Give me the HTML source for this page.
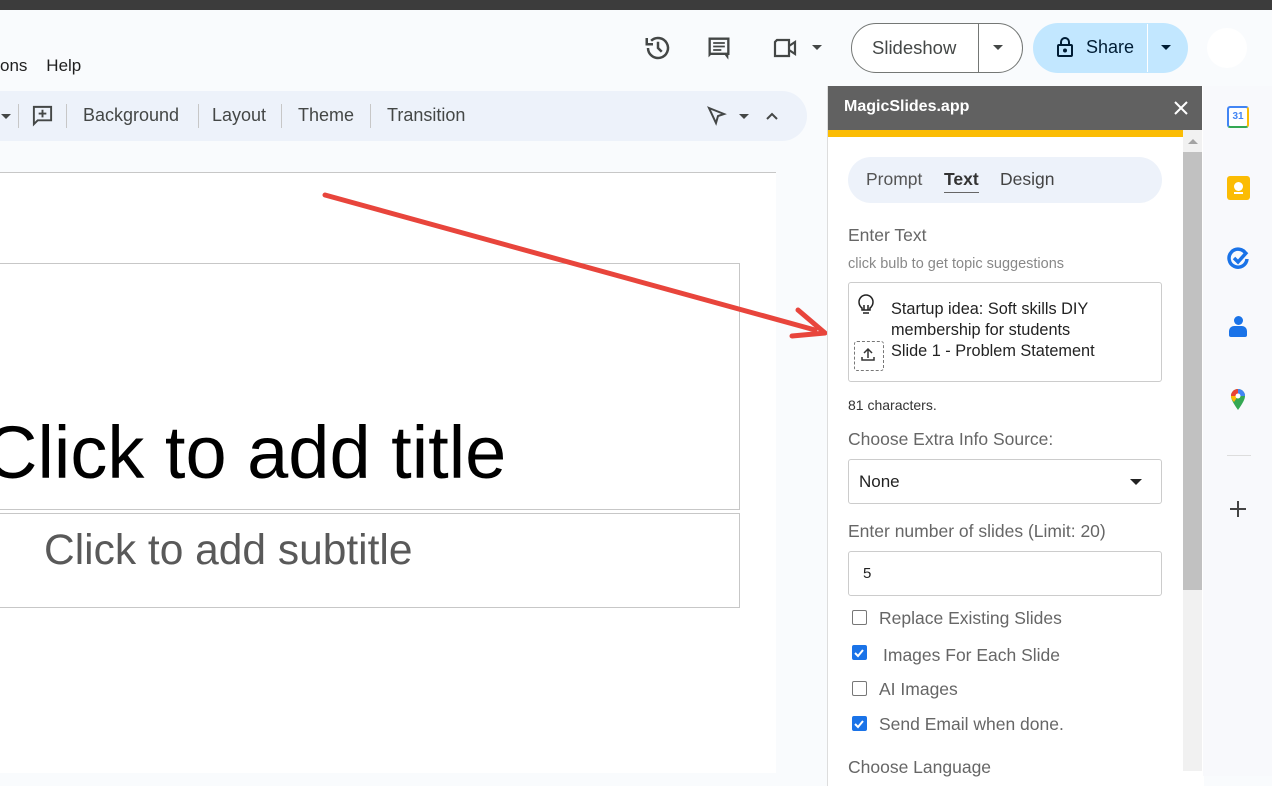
<!DOCTYPE html><html><head><style>
body{margin:0;width:1272px;height:771px;overflow:hidden;background:#f9fbfd;font-family:"Liberation Sans",sans-serif;position:relative}
.a{position:absolute}
.t{color:#444746;font-size:18px}
.cb{position:absolute;left:852px;width:13px;height:13px;border:1px solid #777;border-radius:2px;background:#fff}
.cb.on{background:#1a73e8;border-color:#1a73e8}
.lbl{position:absolute;left:879px;font-size:17px;color:#666}
</style></head><body>
<div class="a" style="left:0;top:0;width:1272px;height:10px;background:#3c3c3c"></div>
<div class="a" style="left:0;top:56px;font-size:17px;color:#1f1f1f">ons&nbsp;&nbsp;&nbsp;&nbsp;Help</div>
<svg class="a" style="left:643px;top:33px" width="30" height="30" viewBox="0 0 24 24" fill="none" stroke="#444746" stroke-width="2"><path d="M4 12a8 8 0 1 0 2.5-5.8"/><path d="M3 4v5h5"/><path d="M12 7v5l3 3"/></svg>
<svg class="a" style="left:705px;top:34px" width="28" height="28" viewBox="0 0 24 24" fill="#444746"><path d="M3 3h18v15H5l-2 2zM5 5v11h14V5zM7 7h10v1.5H7zm0 3h10v1.5H7zm0 3h7v1.5H7z"/><path d="M17 18h3v4z"/></svg>
<svg class="a" style="left:773px;top:37px" width="26" height="22" viewBox="0 0 26 22" fill="none" stroke="#444746" stroke-width="2.2"><path d="M4 3h12v16H2V5z"/><path d="M16 9l6-4v12l-6-4"/></svg>
<div class="a" style="left:812px;top:45px;border:5px solid transparent;border-top-color:#444746;border-bottom:0"></div>
<div class="a" style="left:851px;top:23px;width:170px;height:48px;border:1px solid #747775;border-radius:25px;background:#fff"></div>
<div class="a" style="left:978px;top:24px;width:1px;height:48px;background:#747775"></div>
<div class="a t" style="left:872px;top:37px;font-size:18.5px">Slideshow</div>
<div class="a" style="left:993px;top:45px;border:5px solid transparent;border-top-color:#444746;border-bottom:0"></div>
<div class="a" style="left:1033px;top:23px;width:155px;height:50px;border-radius:25px;background:#c2e7ff"></div>
<div class="a" style="left:1147px;top:24px;width:1px;height:48px;background:#fff"></div>
<svg class="a" style="left:1056px;top:36px" width="18" height="22" viewBox="0 0 18 22" fill="none" stroke="#001d35" stroke-width="2"><rect x="2" y="9" width="14" height="11" rx="1"/><path d="M5 9V6a4 4 0 0 1 8 0v3"/><circle cx="9" cy="14.5" r="1" fill="#001d35"/></svg>
<div class="a" style="left:1086px;top:37px;font-size:18px;color:#001d35">Share</div>
<div class="a" style="left:1161px;top:45px;border:5px solid transparent;border-top-color:#001d35;border-bottom:0"></div>
<div class="a" style="left:1207px;top:28px;width:40px;height:40px;border-radius:50%;background:#fff"></div>
<div class="a" style="left:-30px;top:91px;width:837px;height:50px;border-radius:25px;background:#edf2fa"></div>
<div class="a" style="left:1px;top:114px;border:5px solid transparent;border-top-color:#444746;border-bottom:0"></div>
<div class="a" style="left:18px;top:104px;width:1px;height:24px;background:#c7c7c7"></div>
<svg class="a" style="left:31px;top:104px" width="23" height="23" viewBox="0 0 24 24" fill="none" stroke="#444746" stroke-width="2"><path d="M3 3h18v14H7l-4 4z"/><path d="M12 6v8M8 10h8"/></svg>
<div class="a" style="left:66px;top:104px;width:1px;height:24px;background:#c7c7c7"></div>
<div class="a t" style="left:83px;top:105px">Background</div>
<div class="a" style="left:198px;top:104px;width:1px;height:24px;background:#c7c7c7"></div>
<div class="a t" style="left:212px;top:105px">Layout</div>
<div class="a" style="left:281px;top:104px;width:1px;height:24px;background:#c7c7c7"></div>
<div class="a t" style="left:298px;top:105px">Theme</div>
<div class="a" style="left:370px;top:104px;width:1px;height:24px;background:#c7c7c7"></div>
<div class="a t" style="left:387px;top:105px">Transition</div>
<svg class="a" style="left:707px;top:106px" width="20" height="20" viewBox="0 0 20 20" fill="none" stroke="#444746" stroke-width="2"><path d="M2 2l15 6-6 2-2 7z"/></svg>
<div class="a" style="left:739px;top:114px;border:5px solid transparent;border-top-color:#444746;border-bottom:0"></div>
<svg class="a" style="left:765px;top:111px" width="14" height="10" viewBox="0 0 14 10" fill="none" stroke="#444746" stroke-width="2"><path d="M2 8l5-5 5 5"/></svg>
<div class="a" style="left:0;top:172px;width:776px;height:1px;background:#c7c7c7"></div>
<div class="a" style="left:0;top:173px;width:776px;height:600px;background:#fff"></div>
<div class="a" style="left:-2px;top:263px;width:740px;height:245px;border:1px solid #c7c7c7"></div>
<div class="a" style="left:-2px;top:513px;width:740px;height:93px;border:1px solid #c7c7c7"></div>
<div class="a" style="left:-16px;top:410px;font-size:74px;color:#000;white-space:nowrap">Click to add title</div>
<div class="a" style="left:44px;top:527px;font-size:42.5px;color:#595959;white-space:nowrap">Click to add subtitle</div>
<svg class="a" style="left:320px;top:190px" width="510" height="150"><line x1="5" y1="5" x2="495" y2="140" stroke="#e8453c" stroke-width="5" stroke-linecap="round"/><path d="M478 120L505 143 472 146" fill="none" stroke="#e8453c" stroke-width="5" stroke-linecap="round" stroke-linejoin="round"/></svg>
<div class="a" style="left:827px;top:86px;width:376px;height:700px;background:#fff;border-left:1px solid #ddd"></div>
<div class="a" style="left:828px;top:86px;width:374px;height:44px;background:#616161"></div>
<div class="a" style="left:844px;top:98px;color:#fff;font-weight:bold;font-size:16px">MagicSlides.app</div>
<svg class="a" style="left:1173px;top:100px" width="16" height="16" stroke="#fff" stroke-width="2"><path d="M2 2l12 12M14 2L2 14"/></svg>
<div class="a" style="left:828px;top:130px;width:355px;height:7px;background:#fbbc04"></div>
<div class="a" style="left:1183px;top:130px;width:19px;height:641px;background:#f1f1f1"></div>
<div class="a" style="left:1183px;top:152px;width:19px;height:438px;background:#c1c1c1"></div>
<div class="a" style="left:1188px;top:139px;border:5px solid transparent;border-bottom-color:#a3a3a3;border-top:0"></div>
<div class="a" style="left:848px;top:157px;width:314px;height:46px;border-radius:23px;background:#edf2fa"></div>
<div class="a" style="left:866px;top:169px;font-size:17.5px;color:#555">Prompt</div>
<div class="a" style="left:944px;top:169px;font-size:17.5px;color:#333;font-weight:bold">Text</div>
<div class="a" style="left:944px;top:192px;width:35px;height:1px;background:#666"></div>
<div class="a" style="left:1000px;top:169px;font-size:17.5px;color:#444">Design</div>
<div class="a" style="left:848px;top:225px;font-size:17.5px;color:#666">Enter Text</div>
<div class="a" style="left:848px;top:256px;font-size:14.5px;color:#888">click bulb to get topic suggestions</div>
<div class="a" style="left:848px;top:282px;width:312px;height:98px;border:1px solid #ccc;border-radius:3px"></div>
<svg class="a" style="left:856px;top:293px" width="20" height="24" viewBox="0 0 20 24" fill="none" stroke="#222" stroke-width="1.5"><path d="M6 15c-2-1.5-3-3.5-3-6a7 7 0 0 1 14 0c0 2.5-1 4.5-3 6v2H6z"/><path d="M7 20h6M8 17V12M12 17v-5"/></svg>
<div class="a" style="left:854px;top:341px;width:28px;height:28px;border:1px dashed #777;border-radius:3px"></div>
<svg class="a" style="left:860px;top:346px" width="16" height="16" fill="none" stroke="#333" stroke-width="1.5"><path d="M8 12V3M4 7l4-4 4 4M2 11v3h12v-3"/></svg>
<div class="a" style="left:891px;top:299px;font-size:16.3px;color:#222;line-height:21px">Startup idea: Soft skills DIY<br>membership for students<br>Slide 1 - Problem Statement</div>
<div class="a" style="left:848px;top:397px;font-size:14px;color:#333">81 characters.</div>
<div class="a" style="left:848px;top:429px;font-size:17.5px;color:#666">Choose Extra Info Source:</div>
<div class="a" style="left:848px;top:459px;width:312px;height:43px;border:1px solid #ccc;border-radius:3px"></div>
<div class="a" style="left:859px;top:472px;font-size:17px;color:#222">None</div>
<div class="a" style="left:1130px;top:479px;border:6px solid transparent;border-top-color:#222;border-bottom:0"></div>
<div class="a" style="left:848px;top:521px;font-size:17.5px;color:#666">Enter number of slides (Limit: 20)</div>
<div class="a" style="left:848px;top:551px;width:312px;height:43px;border:1px solid #ccc;border-radius:3px"></div>
<div class="a" style="left:863px;top:565px;font-size:15px;color:#222">5</div>
<div class="cb" style="top:610px"></div><div class="lbl" style="top:608px;font-size:17.5px">Replace Existing Slides</div>
<div class="cb on" style="top:645px"></div><div class="lbl" style="top:645px;left:883px;font-size:17.5px">Images For Each Slide</div>
<div class="cb" style="top:681px"></div><div class="lbl" style="top:679px;font-size:17.5px">AI Images</div>
<div class="cb on" style="top:716px"></div><div class="lbl" style="top:714px;font-size:17.5px">Send Email when done.</div>
<svg class="a" style="left:853px;top:647px" width="12" height="12" fill="none" stroke="#fff" stroke-width="2"><path d="M2 6l3 3 5-6"/></svg>
<svg class="a" style="left:853px;top:718px" width="12" height="12" fill="none" stroke="#fff" stroke-width="2"><path d="M2 6l3 3 5-6"/></svg>
<div class="a" style="left:848px;top:757px;font-size:17.5px;color:#666">Choose Language</div>
<div class="a" style="left:1203px;top:86px;width:69px;height:690px;background:#f8f9fc"></div>
<div class="a" style="left:1227px;top:106px;width:22px;height:22px;border-radius:3px;background:#fff;border:2px solid #4285f4;border-right-color:#fbbc04;border-bottom-color:#34a853;box-sizing:border-box;font-size:10px;color:#4285f4;text-align:center;line-height:18px;font-weight:bold">31</div>
<div class="a" style="left:1227px;top:176px;width:23px;height:24px;border-radius:3px;background:#fbbc04"></div>
<div class="a" style="left:1234px;top:182px;width:9px;height:9px;border-radius:50%;background:#fff"></div>
<div class="a" style="left:1234px;top:192px;width:9px;height:2px;background:#fff"></div>
<svg class="a" style="left:1226px;top:246px" width="26" height="26" viewBox="0 0 26 26" fill="none" stroke="#1a73e8" stroke-width="3.5"><path d="M20 8A9 9 0 1 0 21 13"/><path d="M8 12l4 4 9-10"/></svg>
<div class="a" style="left:1234px;top:316px;width:9px;height:9px;border-radius:50%;background:#1a73e8"></div>
<div class="a" style="left:1229px;top:326px;width:18px;height:11px;border-radius:5px 5px 2px 2px;background:#1a73e8"></div>
<svg class="a" style="left:1229px;top:387px" width="18" height="24" viewBox="0 0 18 24"><path d="M9 23C4 16 2 12 2 9a7 7 0 0 1 14 0c0 3-2 7-7 14z" fill="#34a853"/><path d="M2 9a7 7 0 0 1 7-7v7z" fill="#ea4335"/><path d="M9 2a7 7 0 0 1 7 7H9z" fill="#4285f4"/><path d="M2 9h7l-4 6C3 13 2 11 2 9z" fill="#fbbc04"/><circle cx="9" cy="9" r="2.5" fill="#fff"/></svg>
<div class="a" style="left:1227px;top:455px;width:24px;height:1px;background:#ddd"></div>
<svg class="a" style="left:1229px;top:500px" width="18" height="18" stroke="#444" stroke-width="2"><path d="M9 1v16M1 9h16"/></svg>
</body></html>
